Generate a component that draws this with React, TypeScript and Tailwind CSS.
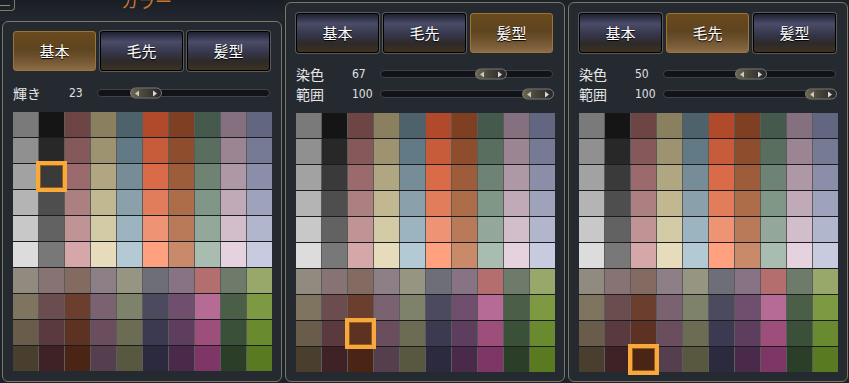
import React from 'react';

const PALETTE: string[][] = [
  ['#7a7a7a', '#151515', '#6e4545', '#8a7f5e', '#4e626c', '#b04a2a', '#7e3f22', '#455a4c', '#857080', '#626680'],
  ['#909090', '#282828', '#85585a', '#9d9370', '#627a86', '#c65c3a', '#8e4e2e', '#5a6e60', '#9b8593', '#767a94'],
  ['#a2a2a2', '#3a3a3a', '#9a6a6c', '#b0a682', '#768d98', '#d96b48', '#9e5d3a', '#6e8374', '#ae98a6', '#8a8ea8'],
  ['#b4b4b4', '#4e4e4e', '#ac7f80', '#c1b892', '#8aa1ab', '#e27d5c', '#ad6d48', '#809686', '#c0aab8', '#9ea2ba'],
  ['#c8c8c8', '#626262', '#c09395', '#d3caa6', '#9cb4bf', '#ee9373', '#b87a58', '#93a89a', '#d2bdcb', '#b2b6cc'],
  ['#dcdcdc', '#787878', '#d5a7a8', '#e6dcbc', '#b3cad5', '#ffa07e', '#c98a6a', '#a8bdb0', '#e6d2de', '#c8cae0'],
  ['#918a7e', '#877373', '#846b62', '#8e7f86', '#959582', '#6e6e78', '#887385', '#b56e6e', '#6e7a6a', '#98a86a'],
  ['#7e745f', '#6b4d4f', '#6b3e2d', '#7a6270', '#7e826b', '#4b4a5f', '#704e6e', '#b66b96', '#4b5e47', '#7d9a42'],
  ['#6a5c4a', '#5a3a3e', '#5e3222', '#6b4e5e', '#6c6c55', '#3c3a50', '#5e3e5e', '#9e4e7a', '#3a5038', '#6a8a30'],
  ['#4a3e2e', '#3e2226', '#4a2414', '#553e4e', '#585840', '#2c2a3e', '#4a2a4a', '#7e3666', '#2a3e28', '#5a7a22'],
];

const TABS = ['基本', '毛先', '髪型'];

const TRACK_W = 173;
const THUMB_W = 32;

function Tab({ label, active }: { label: string; active?: boolean }) {
  return (
    <div
      className={`w-[83px] h-[40px] rounded-[3px] flex items-center justify-center text-[15px] text-white font-['Noto_Sans_CJK_JP',sans-serif] [text-shadow:0_1px_1px_#000] ${
        active
          ? 'border border-[#9c7436] bg-[linear-gradient(180deg,#6a4a1c_0%,#5e4420_45%,#765834_78%,#8a6c46_100%)]'
          : 'border border-black shadow-[0_0_0_1px_#5a5a5a] bg-[linear-gradient(180deg,#1e2030_0%,#4a4c68_26%,#35364a_55%,#2e2a28_78%,#3e3222_100%)]'
      }`}
    >
      {label}
    </div>
  );
}

function Slider({ label, value }: { label: string; value: number }) {
  const left = Math.round((value * (TRACK_W - THUMB_W)) / 100);
  return (
    <div className="flex items-center h-[20px]">
      <span className="w-[57px] pl-[1px] text-[14px] text-[#e6e6e6] font-['Noto_Sans_CJK_JP',sans-serif]">{label}</span>
      <span className="w-[28px] text-[12px] text-[#e0e0e0] font-['DejaVu_Sans_Condensed','Liberation_Sans_Narrow',sans-serif]">
        {value}
      </span>
      <div className="relative w-[173px] h-[8px] rounded-full bg-[#111318] border border-[#3e4249]">
        <div
          className="absolute top-1/2 -translate-y-1/2 w-[32px] h-[11px] rounded-full border border-[#7c7c78] bg-[linear-gradient(90deg,#6e6850_0%,#4a4638_40%,#26272b_100%)] flex items-center justify-between px-[4px]"
          style={{ left }}
        >
          <span className="w-0 h-0 border-y-[3px] border-y-transparent border-r-[4px] border-r-[#c8c8c0]" />
          <span className="w-0 h-0 border-y-[3px] border-y-transparent border-l-[4px] border-l-[#d8d8d8]" />
        </div>
      </div>
    </div>
  );
}

function Palette({ sel }: { sel: [number, number] }) {
  return (
    <div className="flex flex-col gap-px bg-[#1a1c20] w-[259px]">
      {PALETTE.map((row, r) => (
        <div key={r} className="flex gap-px bg-[#5c5c5c]">
          {row.map((c, i) => (
            <div key={i} className="relative w-[25px] h-[25px]" style={{ backgroundColor: c }}>
              {sel[0] === r && sel[1] === i && (
                <div className="absolute -inset-[3px] z-10 border-[4px] border-[#f7a93c] shadow-[inset_0_0_0_1px_#9a5a18]" />
              )}
            </div>
          ))}
        </div>
      ))}
    </div>
  );
}

function Panel({
  active,
  sliders,
  sel,
  top,
}: {
  active: number;
  sliders: { label: string; value: number }[];
  sel: [number, number];
  top: string;
}) {
  return (
    <div className={`flex-1 flex flex-col px-[9px] ${top} rounded-[6px] border border-[#777a68] bg-[#252a31]`}>
      <div className="flex gap-[4px] pl-[1px]">
        {TABS.map((t, i) => (
          <Tab key={t} label={t} active={i === active} />
        ))}
      </div>
      <div className={sliders.length === 1 ? 'mt-[12px]' : 'mt-[11px]'}>
        {sliders.map((s) => (
          <Slider key={s.label} label={s.label} value={s.value} />
        ))}
      </div>
      <div className="mt-[9px] pl-[1px]">
        <Palette sel={sel} />
      </div>
    </div>
  );
}

export default function App() {
  return (
    <div className="w-[849px] h-[383px] overflow-hidden flex gap-[3px] px-[2px] pb-[1px] bg-[#1d2128]">
      <div className="w-[280px] flex flex-col">
        <div className="h-[21px] flex items-start -mx-[2px] bg-[linear-gradient(180deg,#1a1d24,#232830)]">
          <div className="w-[15px] h-[11px] border-r border-b border-[#7a7b6a] rounded-br-[4px] flex items-center">
            <div className="w-[10px] h-px bg-[#8a8a80]" />
          </div>
          <span className="ml-[106px] -mt-[9px] text-[17px] leading-[20px] text-[#c9782f] font-['Noto_Sans_CJK_JP',sans-serif]">
            カラー
          </span>
        </div>
        <Panel active={0} sliders={[{ label: '輝き', value: 23 }]} sel={[2, 1]} top="pt-[9px]" />
      </div>
      <div className="w-[280px] flex flex-col pt-[2px]">
        <Panel
          active={2}
          sliders={[
            { label: '染色', value: 67 },
            { label: '範囲', value: 100 },
          ]}
          sel={[8, 2]}
          top="pt-[10px]"
        />
      </div>
      <div className="w-[280px] flex flex-col pt-[2px]">
        <Panel
          active={1}
          sliders={[
            { label: '染色', value: 50 },
            { label: '範囲', value: 100 },
          ]}
          sel={[9, 2]}
          top="pt-[10px]"
        />
      </div>
    </div>
  );
}
